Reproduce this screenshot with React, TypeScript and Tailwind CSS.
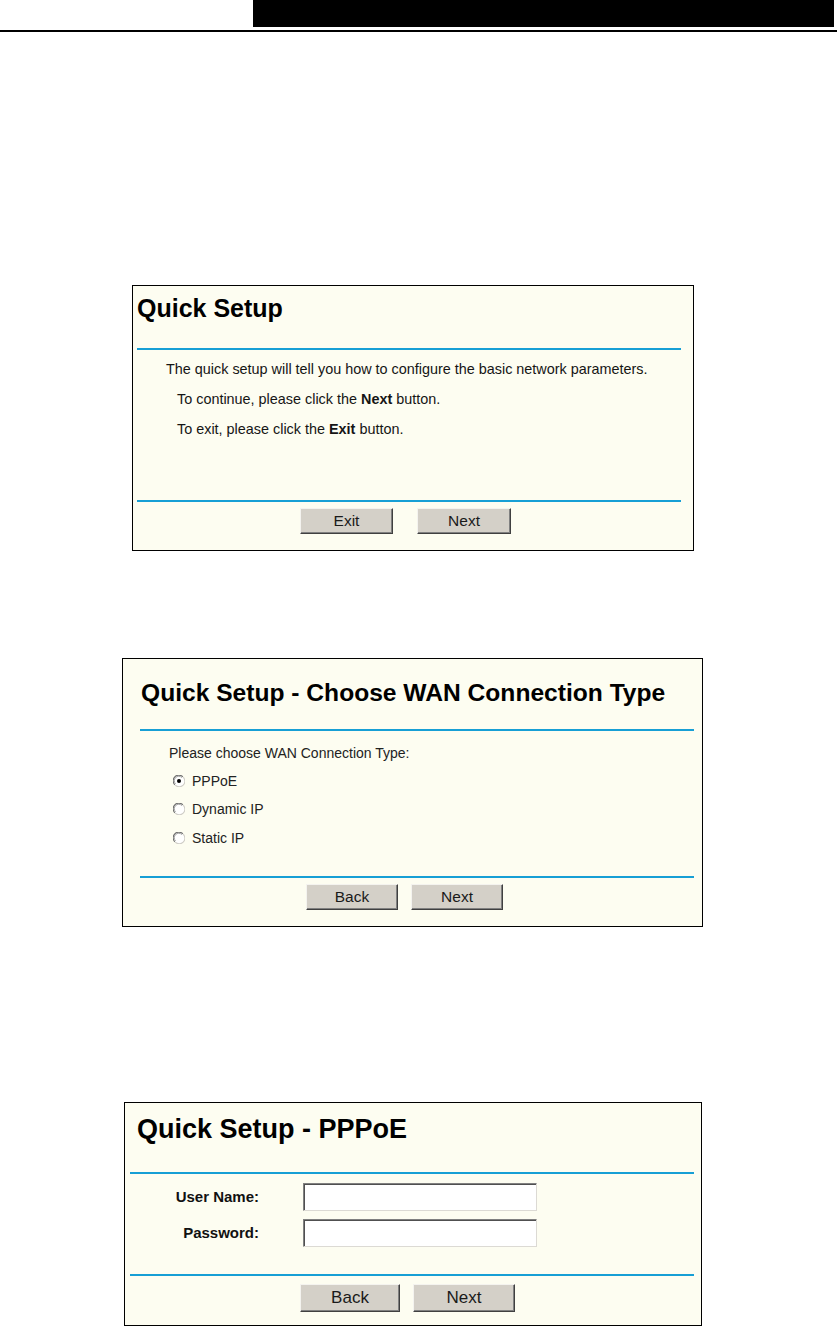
import type { ReactNode } from "react";

function Rule({ className }: { className: string }) {
  return <div className={`h-[2px] bg-[#179fd5] ${className}`} />;
}

function Btn({ children, className }: { children: ReactNode; className: string }) {
  return (
    <button
      className={`flex items-center justify-center border border-t-[#f4f3ef] border-l-[#f4f3ef] border-r-[#404040] border-b-[#404040] bg-[#d4d0c8] text-[#1a1a1a] shadow-[inset_-1px_-1px_0_#808080] ${className}`}
    >
      {children}
    </button>
  );
}

function Radio({ checked }: { checked?: boolean }) {
  return (
    <svg width="12" height="12" viewBox="0 0 12 12" className="shrink-0">
      <circle cx="6" cy="6" r="5.5" fill="#ffffff" />
      <path d="M1.8 9.8 A5.5 5.5 0 0 1 9.8 1.8" stroke="#6e6e6e" strokeWidth="1.1" fill="none" />
      <path d="M2.6 8.9 A4.4 4.4 0 0 1 8.9 2.6" stroke="#9a9a9a" strokeWidth="0.9" fill="none" />
      <path d="M10.2 2.2 A5.5 5.5 0 0 1 2.2 10.2" stroke="#d0cec8" strokeWidth="1.1" fill="none" />
      {checked && <circle cx="6" cy="6" r="2" fill="#000000" />}
    </svg>
  );
}

function TextBox() {
  return (
    <input
      className="h-[28px] w-[234px] border border-t-[#808080] border-l-[#808080] border-b-[#dcdad4] border-r-[#dcdad4] bg-white shadow-[inset_1px_1px_0_#505050] outline-none"
    />
  );
}

export default function App() {
  return (
    <div className="min-h-[1326px] w-[837px] bg-white pb-[1px] font-['Liberation_Sans',Arial,sans-serif] text-black">
      {/* page header */}
      <div className="flex">
        <div className="ml-[253px] h-[27px] w-[581px] bg-black" />
      </div>
      <div className="mt-[3px] h-[2px] w-full bg-black" />

      {/* Quick Setup */}
      <div className="ml-[132px] mt-[253px] flex h-[266px] w-[562px] flex-col border border-black bg-[#fdfdf1]">
        <h1 className="pl-[4px] pt-[8px] text-[25px] font-bold leading-[28px]">Quick Setup</h1>
        <Rule className="ml-[4px] mt-[26px] w-[544px]" />
        <p className="mt-[11px] pl-[33px] text-[14.4px] leading-[16px] text-[#151515]">
          The quick setup will tell you how to configure the basic network parameters.
        </p>
        <p className="mt-[14px] pl-[44px] text-[14.4px] leading-[16px] text-[#151515]">
          To continue, please click the <b>Next</b> button.
        </p>
        <p className="mt-[14px] pl-[44px] text-[14.4px] leading-[16px] text-[#151515]">
          To exit, please click the <b>Exit</b> button.
        </p>
        <Rule className="ml-[4px] mt-[63px] w-[544px]" />
        <div className="mt-[6px] flex gap-[24px] pl-[167px]">
          <Btn className="h-[26px] w-[93px] text-[15.5px]">Exit</Btn>
          <Btn className="h-[26px] w-[94px] text-[15.5px]">Next</Btn>
        </div>
      </div>

      {/* Choose WAN Connection Type */}
      <div className="ml-[122px] mt-[107px] flex h-[269px] w-[581px] flex-col border border-black bg-[#fdfdf1]">
        <h1 className="pl-[18px] pt-[20px] text-[24.6px] font-bold leading-[28px]">
          Quick Setup - Choose WAN Connection Type
        </h1>
        <Rule className="ml-[17px] mt-[22px] w-[554px]" />
        <p className="mt-[14px] pl-[46px] text-[14px] leading-[16px] text-[#222]">
          Please choose WAN Connection Type:
        </p>
        {[
          { label: "PPPoE", checked: true, mt: "mt-[12px]" },
          { label: "Dynamic IP", checked: false, mt: "mt-[12px]" },
          { label: "Static IP", checked: false, mt: "mt-[13px]" },
        ].map((r) => (
          <label
            key={r.label}
            className={`flex h-[16px] items-center gap-[7px] pl-[50px] text-[14px] leading-[16px] text-[#222] ${r.mt}`}
          >
            <Radio checked={r.checked} />
            {r.label}
          </label>
        ))}
        <Rule className="ml-[17px] mt-[30px] w-[554px]" />
        <div className="mt-[6px] flex gap-[13px] pl-[183px]">
          <Btn className="h-[26px] w-[92px] text-[15.5px]">Back</Btn>
          <Btn className="h-[26px] w-[92px] text-[15.5px]">Next</Btn>
        </div>
      </div>

      {/* PPPoE */}
      <div className="ml-[124px] mt-[175px] flex h-[224px] w-[578px] flex-col border border-black bg-[#fdfdf1]">
        <h1 className="pl-[12px] pt-[11px] text-[27px] font-bold leading-[30px]">Quick Setup - PPPoE</h1>
        <Rule className="ml-[5px] mt-[28px] w-[564px]" />
        <div className="mt-[9px] flex items-center gap-[44px]">
          <span className="w-[134px] text-right text-[15px] font-bold text-[#111]">User Name:</span>
          <TextBox />
        </div>
        <div className="mt-[8px] flex items-center gap-[44px]">
          <span className="w-[134px] text-right text-[15px] font-bold text-[#111]">Password:</span>
          <TextBox />
        </div>
        <Rule className="ml-[5px] mt-[27px] w-[564px]" />
        <div className="mt-[8px] flex gap-[13px] pl-[175px]">
          <Btn className="h-[28px] w-[100px] text-[17px]">Back</Btn>
          <Btn className="h-[28px] w-[102px] text-[17px]">Next</Btn>
        </div>
      </div>
    </div>
  );
}
